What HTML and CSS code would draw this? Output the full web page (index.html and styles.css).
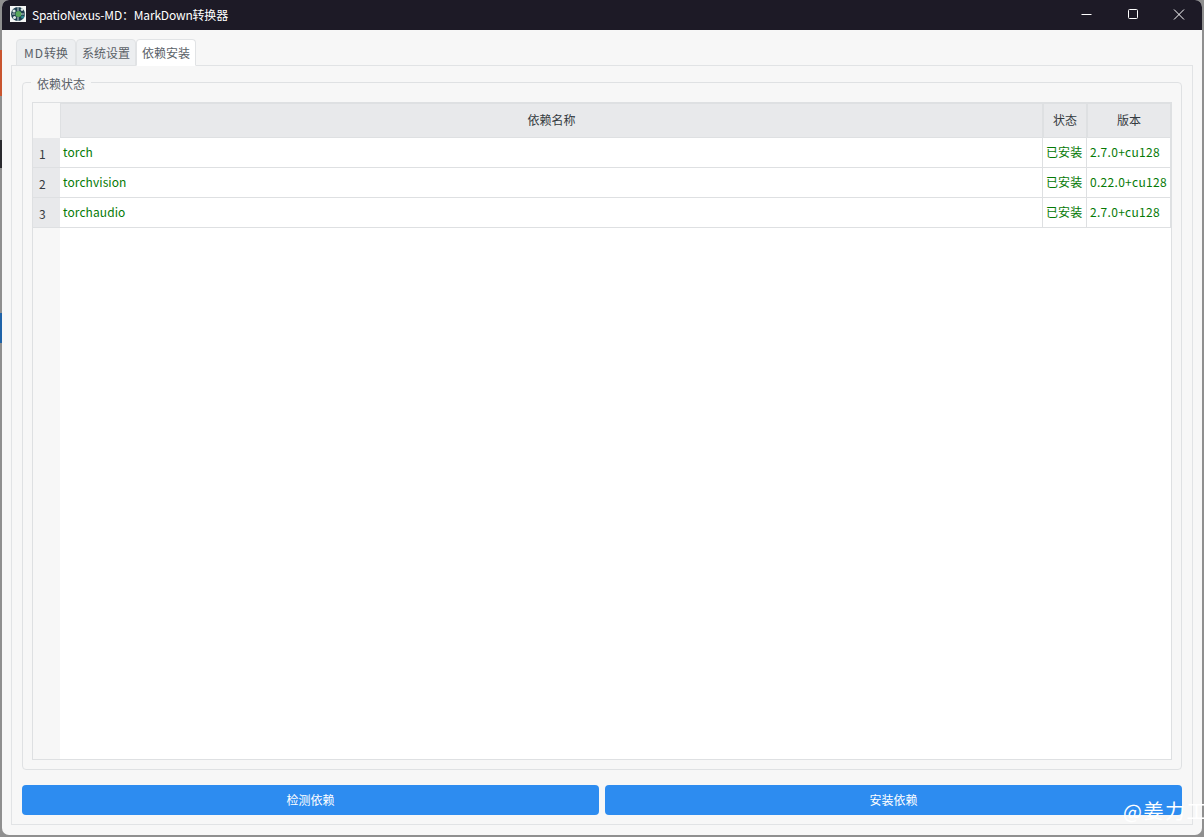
FILE: index.html
```html
<!DOCTYPE html>
<html lang="zh-CN">
<head>
<meta charset="utf-8">
<title>SpatioNexus-MD：MarkDown转换器</title>
<link rel="stylesheet" href="styles.css">
</head>
<body>
<div class="desktop">
  <span class="peek peek-orange"></span>
  <span class="peek peek-dark"></span>
  <span class="peek peek-blue"></span>
  <div class="window">
    <header class="titlebar">
      <svg class="app-icon" width="16" height="16" viewBox="0 0 16 16">
        <rect width="16" height="16" fill="#f4f6f5"/>
        <circle cx="8" cy="8" r="7" fill="#1d3f4f"/>
        <circle cx="8.5" cy="8" r="3" fill="#58a85a"/>
        <circle cx="4" cy="5" r="1.6" fill="#dfe9e6"/>
        <circle cx="12" cy="3.6" r="1.3" fill="#dfe9e6"/>
        <circle cx="12.5" cy="11" r="1.5" fill="#2d8a93"/>
        <circle cx="4.5" cy="11.5" r="1.5" fill="#dfe9e6"/>
        <path d="M8 1v4M2 8h3M11 8h3.5M8 11v4" stroke="#f4f6f5" stroke-width=".8"/>
      </svg>
      <span class="app-title">SpatioNexus-MD：MarkDown转换器</span>
      <div class="controls">
        <svg class="ctl" width="46" height="30" viewBox="0 0 46 30"><path d="M17.5 14.5h10" stroke="#fff" stroke-width="1"/></svg>
        <svg class="ctl" width="46" height="30" viewBox="0 0 46 30"><rect x="18.5" y="9.5" width="9" height="9" rx="1" fill="none" stroke="#fff" stroke-width="1"/></svg>
        <svg class="ctl" width="46" height="30" viewBox="0 0 46 30"><path d="M18 9.5l10 10M28 9.5l-10 10" stroke="#fff" stroke-width="1"/></svg>
      </div>
    </header>
    <main class="body">
      <nav class="tabs">
        <span class="tab"><span class="tab-latin">MD</span>转换</span>
        <span class="tab">系统设置</span>
        <span class="tab tab-active">依赖安装</span>
      </nav>
      <section class="pane">
        <fieldset class="group">
          <legend class="group-title">依赖状态</legend>
          <div class="table">
            <div class="hcell corner"></div>
            <div class="hcell">依赖名称</div>
            <div class="hcell">状态</div>
            <div class="hcell">版本</div>

            <div class="rowhead">1</div>
            <div class="cell">torch</div>
            <div class="cell">已安装</div>
            <div class="cell ver">2.7.0+cu128</div>

            <div class="rowhead">2</div>
            <div class="cell">torchvision</div>
            <div class="cell">已安装</div>
            <div class="cell ver">0.22.0+cu128</div>

            <div class="rowhead">3</div>
            <div class="cell">torchaudio</div>
            <div class="cell">已安装</div>
            <div class="cell ver">2.7.0+cu128</div>

            <div class="gutter"></div>
            <div class="blank"></div>
          </div>
        </fieldset>
        <div class="actions">
          <button class="btn">检测依赖</button>
          <button class="btn">安装依赖</button>
        </div>
      </section>
    </main>
  </div>
  <span class="watermark">@姜力工</span>
</div>
</body>
</html>
```
FILE: styles.css
```css
* { box-sizing: border-box; }
html, body { margin: 0; height: 100%; }
body {
  font-family: "Noto Sans CJK SC", "Open Sans", sans-serif;
  font-size: 12px;
  overflow: hidden;
}
.desktop {
  position: relative;
  width: 1204px;
  height: 837px;
  background: #8f8f8f;
  overflow: hidden;
}
.peek { position: absolute; left: 0; width: 3px; }
.peek-orange { top: 50px; height: 46px; background: #c9552f; }
.peek-dark { top: 140px; height: 28px; background: #2a2a2e; }
.peek-blue { top: 313px; height: 30px; background: #1f63a8; }
.window {
  position: absolute;
  left: 2px;
  top: 0;
  width: 1200px;
  height: 835px;
  border-radius: 7px;
  overflow: hidden;
  background: #f7f7f7;
  display: flex;
  flex-direction: column;
}
.titlebar {
  height: 30px;
  flex: none;
  background: #1d1a26;
  display: flex;
  align-items: center;
  padding-left: 8px;
  color: #fff;
}
.app-icon { flex: none; margin-top: -2px; }
.app-title { margin-left: 6px; font-size: 12px; margin-top: -1px; letter-spacing: -0.18px; }
.controls { margin-left: auto; display: flex; }
.ctl { display: block; }
.body {
  flex: 1;
  display: flex;
  flex-direction: column;
  padding: 9px 9px 10px;
  min-height: 0;
}
.tabs { display: flex; padding-left: 5px; height: 26px; flex: none; position: relative; z-index: 1; }
.tab {
  width: 60px;
  height: 27px;
  border: 1px solid #e1e3e5;
  border-radius: 4px 4px 0 0;
  background: #eceef0;
  color: #5a6167;
  display: flex;
  align-items: center;
  justify-content: center;
  font-size: 12px;
  padding-bottom: 1px;
  white-space: nowrap;
}
.tab-latin { letter-spacing: 1px; }
.tab-active { background: #fff; border-bottom-color: #fff; }
.pane {
  flex: 1;
  min-height: 0;
  border: 1px solid #e1e3e5;
  padding: 6px 10px 9px;
  display: flex;
  flex-direction: column;
  gap: 15px;
}
.group {
  flex: 1;
  min-height: 0;
  margin: 0;
  min-width: 0;
  border: 1px solid #dfe1e3;
  border-radius: 4px;
  padding: 9px 9px 9px;
  display: flex;
  flex-direction: column;
}
.group-title {
  margin-left: -1px;
  padding: 3px 6px 1px;
  color: #5a6167;
  font-size: 12px;
  line-height: 17px;
}
.table {
  flex: 1;
  min-height: 0;
  border: 1px solid #dee0e2;
  background: #fff;
  display: grid;
  grid-template-columns: 27px 983px 44px 84px;
  grid-template-rows: 35px 30px 30px 30px 1fr;
}
.hcell {
  background: #e8e9eb;
  border: 1px solid #dee0e2;
  padding: 0 0 2px;
  color: #343a40;
  display: flex;
  align-items: center;
  justify-content: center;
  font-size: 12px;
}
.corner { background: #f7f7f7; border: 0; }
.rowhead {
  background: #e8e9eb;
  border-bottom: 1px solid #dee0e2;
  color: #343a40;
  display: flex;
  align-items: center;
  padding-left: 6px;
  padding-top: 1px;
}
.cell {
  background: #fff;
  border-right: 1px solid #dee0e2;
  border-bottom: 1px solid #dee0e2;
  color: #067a06;
  display: flex;
  align-items: center;
  padding: 0 0 2px 3px;
  white-space: nowrap;
  font-size: 12px;
  letter-spacing: 0.08px;
}
.ver { letter-spacing: 0.3px; }
.gutter { background: #f7f7f7; }
.blank { grid-column: 2 / 5; background: #fff; }
.actions { display: flex; gap: 6px; flex: none; }
.btn {
  flex: 1;
  height: 30px;
  border: 0;
  border-radius: 4px;
  background: #2d8cf0;
  color: #fff;
  font: inherit;
  font-size: 12px;
  padding: 0 0 1px;
}
.watermark {
  position: absolute;
  left: 1123px;
  top: 797px;
  color: #fff;
  font-size: 20px;
  line-height: 28px;
  white-space: nowrap;
  font-family: "Noto Sans CJK SC", sans-serif;
  letter-spacing: 1.5px;
}
```
